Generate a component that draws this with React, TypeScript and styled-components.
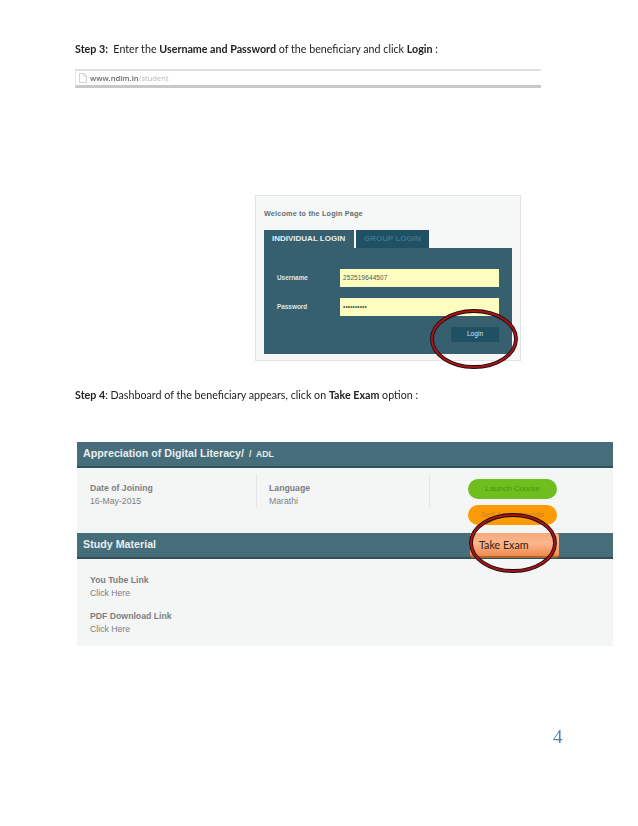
import React from 'react';
import styled, { createGlobalStyle } from 'styled-components';

const GlobalStyle = createGlobalStyle`
  html, body {
    margin: 0;
    padding: 0;
    background: #fff;
  }
  * {
    box-sizing: border-box;
  }
`;

const RedRing = () => (
  <svg width="88" height="60" viewBox="0 0 88 60">
    <ellipse cx="44" cy="30" rx="42" ry="28" fill="none" stroke="#1d0b0b" strokeWidth="3.8" />
    <ellipse cx="44" cy="30" rx="42" ry="28" fill="none" stroke="#a51419" strokeWidth="2.2" />
  </svg>
);

const App = () => (
  <>
    <GlobalStyle />
    <Page>
      <StepText>
        <b>Step 3:</b>&nbsp; Enter the <b>Username and Password</b> of the beneficiary and click <b>Login</b> :
      </StepText>

      <UrlBar>
        <svg width="8" height="10" viewBox="0 0 8 10" fill="none">
          <path d="M.5.5h4.5l2.5 2.5v6.5h-7z M5 .5v2.5h2.5" stroke="#c4c7ca" strokeWidth="0.8" />
        </svg>
        <UrlText>
          www.ndlm.in<span>/student</span>
        </UrlText>
      </UrlBar>

      <LoginCard>
        <Welcome>Welcome to the Login Page</Welcome>
        <Tabs>
          <ActiveTab>INDIVIDUAL LOGIN</ActiveTab>
          <IdleTab>GROUP LOGIN</IdleTab>
        </Tabs>
        <LoginPanel>
          <FieldRow>
            <FieldLabel>Username</FieldLabel>
            <FieldBox>252519644507</FieldBox>
          </FieldRow>
          <FieldRow>
            <FieldLabel>Password</FieldLabel>
            <FieldBox>••••••••••</FieldBox>
          </FieldRow>
          <LoginButton>Login</LoginButton>
        </LoginPanel>
        <Ring $right={2} $bottom={-9}>
          <RedRing />
        </Ring>
      </LoginCard>

      <StepFour>
        <b>Step 4</b>: Dashboard of the beneficiary appears, click on <b>Take Exam</b> option :
      </StepFour>

      <Dashboard>
        <SectionBar>
          Appreciation of Digital Literacy/ <small>/&nbsp;&nbsp;ADL</small>
        </SectionBar>
        <CourseBody>
          <InfoCol>
            <InfoTitle>Date of Joining</InfoTitle>
            <InfoValue>16-May-2015</InfoValue>
          </InfoCol>
          <InfoCol>
            <InfoTitle>Language</InfoTitle>
            <InfoValue>Marathi</InfoValue>
          </InfoCol>
          <ActionCol>
            <PillButton $bg="#6ebf1e" $color="#4a9412">Launch Course</PillButton>
            <PillButton $bg="#fb9b06" $color="#cf7f22">Self Assessments</PillButton>
          </ActionCol>
        </CourseBody>
        <SectionBar>Study Material</SectionBar>
        <StudyBody>
          <LinkBlock>
            <InfoTitle>You Tube Link</InfoTitle>
            <InfoValue>Click Here</InfoValue>
          </LinkBlock>
          <LinkBlock>
            <InfoTitle>PDF Download Link</InfoTitle>
            <InfoValue>Click Here</InfoValue>
          </LinkBlock>
        </StudyBody>
        <ExamButton>Take Exam</ExamButton>
        <Ring $right={56} $bottom={73}>
          <RedRing />
        </Ring>
      </Dashboard>

      <PageNumber>4</PageNumber>
    </Page>
  </>
);

export default App;

const Page = styled.main`
  width: 638px;
  height: 826px;
  padding-top: 42px;
  font-family: Lato, 'Liberation Sans', sans-serif;
  color: #222;
  overflow: hidden;
  filter: blur(0.35px);
`;

const StepText = styled.p`
  margin: 0 0 0 75px;
  font-size: 10.7px;
  line-height: 14px;
  white-space: nowrap;

  b {
    font-weight: 700;
  }
`;

const UrlBar = styled.div`
  display: flex;
  align-items: center;
  gap: 3px;
  width: 466px;
  height: 19px;
  margin: 13px 0 0 75px;
  padding-left: 3px;
  background: #fff;
  border-top: 2px solid #e0e0e0;
  border-bottom: 3px solid #c8c8c8;
  border-left: 1px solid #e8e8e8;
`;

const UrlText = styled.span`
  font-family: 'Open Sans', sans-serif;
  font-size: 7.6px;
  color: #666b70;
  font-weight: 600;

  span {
    color: #b4b8bb;
    font-weight: 400;
  }
`;

const LoginCard = styled.section`
  position: relative;
  width: 266px;
  height: 166px;
  margin: 107px 0 0 255px;
  padding: 13px 8px 6px;
  background: #f6f7f7;
  border: 1px solid #e2e4e4;
  font-family: 'Liberation Sans', sans-serif;
`;

const Welcome = styled.div`
  font-size: 7.2px;
  line-height: 10px;
  font-weight: 700;
  letter-spacing: 0.2px;
  color: #5d6f74;
`;

const Tabs = styled.div`
  display: flex;
  align-items: flex-end;
  gap: 2px;
  margin-top: 11px;
  height: 18px;
`;

const ActiveTab = styled.div`
  width: 90px;
  height: 18px;
  padding-left: 8px;
  background: #36606f;
  color: #e9eef0;
  font-size: 8px;
  font-weight: 700;
  line-height: 18px;
  white-space: nowrap;
`;

const IdleTab = styled.div`
  width: 73px;
  height: 18px;
  padding-left: 8px;
  background: #1f5064;
  color: #3d7688;
  font-size: 8px;
  font-weight: 700;
  line-height: 17px;
  white-space: nowrap;
`;

const LoginPanel = styled.div`
  display: flex;
  flex-direction: column;
  height: 106px;
  padding: 21px 13px 0;
  background: #36606f;
  gap: 11px;
`;

const FieldRow = styled.div`
  display: flex;
  align-items: center;
  height: 18px;
`;

const FieldLabel = styled.div`
  width: 63px;
  font-size: 6.4px;
  font-weight: 700;
  color: #dfe7ea;
  transform: translateY(-1px);
`;

const FieldBox = styled.div`
  width: 159px;
  height: 18px;
  padding-left: 3px;
  background: #fdfdc0;
  font-size: 6.4px;
  line-height: 18px;
  letter-spacing: 0.15px;
  color: #4c5650;
`;

const LoginButton = styled.div`
  align-self: flex-end;
  width: 48px;
  height: 15px;
  background: #1f5064;
  color: #d8e3e7;
  font-size: 6.6px;
  line-height: 14px;
  text-align: center;
`;

const Ring = styled.div<{ $right: number; $bottom: number }>`
  position: absolute;
  width: 88px;
  height: 60px;
  right: ${p => p.$right}px;
  bottom: ${p => p.$bottom}px;
  line-height: 0;
`;

const StepFour = styled.p`
  margin: 27px 0 0 75px;
  font-size: 10.7px;
  line-height: 14px;
  white-space: nowrap;
`;

const Dashboard = styled.section`
  position: relative;
  width: 536px;
  height: 204px;
  margin: 40px 0 0 77px;
  background: #f4f5f5;
  font-family: 'Liberation Sans', sans-serif;
`;

const SectionBar = styled.div`
  height: 26px;
  padding-left: 6px;
  background: #466d7a;
  border-bottom: 2px solid #31505c;
  color: #e9eff1;
  font-size: 10.7px;
  font-weight: 700;
  line-height: 23px;
  white-space: nowrap;

  small {
    font-size: 8.6px;
    margin-left: 2px;
  }
`;

const CourseBody = styled.div`
  display: grid;
  grid-template-columns: 167px 173px 1fr;
  height: 65px;
  padding: 6px 0 0 13px;
`;

const InfoCol = styled.div`
  height: 33px;
  padding-top: 8px;
  border-right: 1px solid #e4e5e5;

  & + & {
    padding-left: 12px;
  }
`;

const InfoTitle = styled.div`
  font-size: 8.7px;
  line-height: 13px;
  font-weight: 700;
  color: #7c7e80;
`;

const InfoValue = styled.div`
  font-size: 8.7px;
  line-height: 13px;
  color: #7e8082;
`;

const ActionCol = styled.div`
  display: flex;
  flex-direction: column;
  gap: 6px;
  padding: 5px 0 0 38px;
`;

const PillButton = styled.div<{ $bg: string; $color: string }>`
  width: 89px;
  height: 20px;
  border-radius: 10px;
  background: ${p => p.$bg};
  color: ${p => p.$color};
  font-size: 8px;
  line-height: 20px;
  text-align: center;
  white-space: nowrap;
`;

const StudyBody = styled.div`
  display: flex;
  flex-direction: column;
  gap: 10px;
  padding: 15px 0 0 13px;
`;

const LinkBlock = styled.div``;

const ExamButton = styled.div`
  position: absolute;
  left: 393px;
  top: 91px;
  width: 89px;
  height: 25px;
  padding-left: 9px;
  border-radius: 3px;
  background: linear-gradient(180deg, #f6ab7c 0%, #fbb68c 45%, #ee8a4e 100%);
  border-bottom: 2px solid #b1642c;
  font-family: Lato, sans-serif;
  font-size: 10.7px;
  line-height: 24px;
  color: #33200f;
`;

const PageNumber = styled.div`
  margin: 80px 0 0 553px;
  font-family: 'Liberation Serif', serif;
  font-size: 19px;
  line-height: 22px;
  color: #4f81bd;
`;
